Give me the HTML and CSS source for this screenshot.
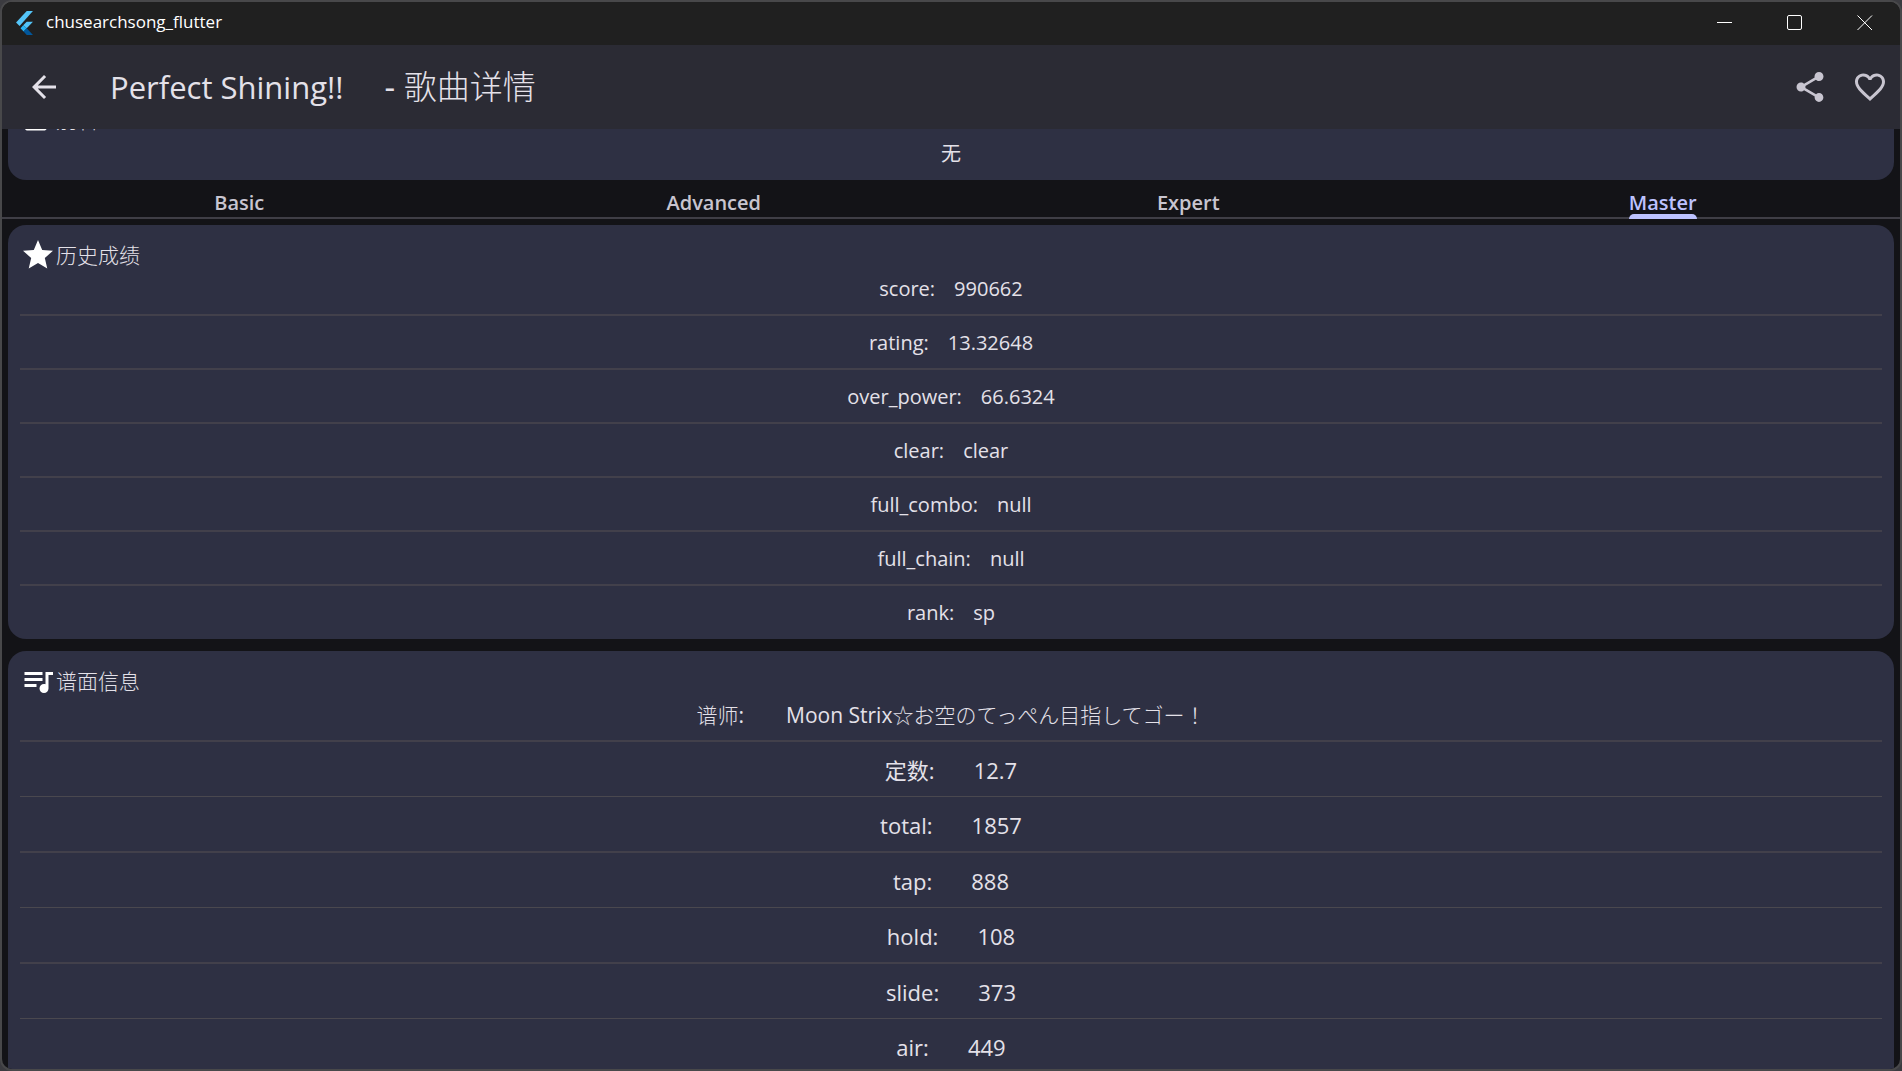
FILE: index.html
```html
<!DOCTYPE html>
<html lang="zh-CN">
<head>
<meta charset="utf-8">
<title>chusearchsong_flutter</title>
<link rel="stylesheet" href="styles.css">
</head>
<body>
<div class="window">
  <header class="titlebar">
    <svg class="logo" viewBox="0 0 19 27" aria-hidden="true">
      <path fill="#54c5f8" d="M12 0h7L4 17 0 13z"/>
      <path fill="#54c5f8" d="M12 12h7l-7 7.500-4-3.500z"/>
      <path fill="#29b6f6" d="M8 16l4 3.500L8.500 23 5 19.500z"/>
      <path fill="#01579b" d="M8.500 23l3.500-3.500 7 7.500h-7z"/>
    </svg>
    <span class="app-name">chusearchsong_flutter</span>
    <div class="controls">
      <button type="button" aria-label="Minimize"><svg viewBox="0 0 16 16"><path d="M0 7.500h15"/></svg></button>
      <button type="button" aria-label="Maximize"><svg viewBox="0 0 16 16"><rect x=".5" y=".5" width="14" height="14" rx="1.500"/></svg></button>
      <button type="button" aria-label="Close"><svg viewBox="0 0 16 16"><path d="M.5.5l14.500 14.500M15 .5L.5 15"/></svg></button>
    </div>
  </header>
  <div class="appbar">
    <button type="button" class="icon-button back" aria-label="返回"><svg class="icon" viewBox="0 0 24 24"><path d="M20 11H7.830l5.590-5.590L12 4l-8 8 8 8 1.410-1.410L7.830 13H20v-2z"/></svg></button>
    <h1 class="title"><span>Perfect Shining!!</span><span class="title-suffix">- <span class="cjk">歌曲详情</span></span></h1>
    <button type="button" class="icon-button" aria-label="分享"><svg class="icon" viewBox="0 0 24 24"><path d="M18 16.080c-.76 0-1.440.3-1.960.77L8.910 12.700c.05-.23.09-.46.09-.7s-.04-.47-.09-.7l7.050-4.110c.54.5 1.250.81 2.040.81 1.660 0 3-1.340 3-3s-1.340-3-3-3-3 1.340-3 3c0 .24.04.47.09.7L8.040 9.810C7.500 9.310 6.790 9 6 9c-1.660 0-3 1.340-3 3s1.340 3 3 3c.79 0 1.500-.31 2.040-.81l7.120 4.160c-.05.21-.08.43-.08.65 0 1.610 1.310 2.920 2.920 2.920s2.920-1.310 2.920-2.920-1.310-2.920-2.920-2.920z"/></svg></button>
    <button type="button" class="icon-button" aria-label="收藏"><svg class="icon" viewBox="0 0 24 24"><path d="M16.500 3c-1.740 0-3.410.81-4.500 2.090C10.910 3.810 9.240 3 7.500 3 4.420 3 2 5.420 2 8.500c0 3.780 3.400 6.860 8.550 11.540L12 21.350l1.450-1.320C18.600 15.360 22 12.280 22 8.500 22 5.420 19.580 3 16.500 3zm-4.400 15.550l-.1.1-.1-.1C7.140 14.240 4 11.390 4 8.500 4 6.500 5.500 5 7.500 5c1.540 0 3.040.99 3.570 2.360h1.870C13.460 5.990 14.960 5 16.500 5c2 0 3.500 1.500 3.500 3.500 0 2.890-3.140 5.740-7.900 10.050z"/></svg></button>
  </div>
  <main class="content">
    <section class="card card-alias">
      <h2 class="card-head"><svg class="icon" viewBox="0 0 24 24"><path d="M17.630 5.840C17.270 5.330 16.670 5 16 5L5 5.010C3.900 5.010 3 5.900 3 7v10c0 1.100.9 1.990 2 1.990L16 19c.67 0 1.270-.33 1.630-.84L22 12l-4.370-6.160z"/></svg>别名</h2>
      <p class="alias">无</p>
    </section>
    <nav class="tabs">
      <a href="#basic">Basic</a>
      <a href="#advanced">Advanced</a>
      <a href="#expert">Expert</a>
      <a href="#master" class="active" aria-current="true">Master</a>
    </nav>
    <section class="card">
      <h2 class="card-head"><svg class="icon" viewBox="0 0 24 24"><path d="M12 17.270L18.180 21l-1.640-7.030L22 9.240l-7.190-.61L12 2 9.190 8.630 2 9.240l5.460 4.730L5.820 21z"/></svg>历史成绩</h2>
      <dl class="rows">
        <div><dt>score:</dt><dd>990662</dd></div>
        <div><dt>rating:</dt><dd>13.32648</dd></div>
        <div><dt>over_power:</dt><dd>66.6324</dd></div>
        <div><dt>clear:</dt><dd>clear</dd></div>
        <div><dt>full_combo:</dt><dd>null</dd></div>
        <div><dt>full_chain:</dt><dd>null</dd></div>
        <div><dt>rank:</dt><dd>sp</dd></div>
      </dl>
    </section>
    <section class="card card-chart">
      <h2 class="card-head"><svg class="icon" viewBox="0 0 24 24"><path d="M15 6H3v2h12V6zm0 4H3v2h12v-2zM3 16h8v-2H3v2zM17 6v8.180c-.31-.11-.65-.18-1-.18-1.660 0-3 1.340-3 3s1.340 3 3 3 3-1.340 3-3V8h3V6h-5z"/></svg>谱面信息</h2>
      <dl class="rows rows-chart">
        <div class="charter"><dt><span class="cjk">谱师</span>:</dt><dd>Moon Strix<span class="cjk" lang="ja">☆お空のてっぺん目指してゴー！</span></dd></div>
        <div><dt>定数:</dt><dd>12.7</dd></div>
        <div><dt>total:</dt><dd>1857</dd></div>
        <div><dt>tap:</dt><dd>888</dd></div>
        <div><dt>hold:</dt><dd>108</dd></div>
        <div><dt>slide:</dt><dd>373</dd></div>
        <div><dt>air:</dt><dd>449</dd></div>
      </dl>
    </section>
  </main>
</div>
</body>
</html>
```
FILE: styles.css
```css
* { box-sizing: border-box; }

body {
  margin: 0;
  background: #3b3b40;
  color: #e4e1e9;
  font-family: "Open Sans", "Noto Sans CJK SC", sans-serif;
  font-size: 20px;
  line-height: 30px;
}

h1, h2, p, dl, dd { margin: 0; font-weight: 400; }

button {
  display: flex;
  align-items: center;
  justify-content: center;
  padding: 0;
  border: 0;
  background: none;
  color: inherit;
}

.window {
  display: flex;
  flex-direction: column;
  height: 100vh;
  overflow: hidden;
  border: 2px solid #48484a;
  border-radius: 12px;
  background: #131317;
}

.titlebar {
  display: flex;
  flex: none;
  align-items: center;
  height: 43px;
  padding: 0 0 1px 13px;
  background: #202020;
  color: #fff;
  font-size: 17px;
}

.logo { width: 19px; height: 24px; margin-right: 12px; }
.app-name { flex: 1; padding-bottom: 2px; }
.controls { display: flex; height: 100%; }
.controls button { width: 70px; }

.controls svg {
  width: 16px;
  height: 16px;
  fill: none;
  stroke: #fff;
}

.appbar {
  display: flex;
  flex: none;
  align-items: center;
  height: 84px;
  background: #2b2b34;
}

.icon { flex: none; width: 36px; height: 36px; fill: currentColor; }
.icon-button { width: 60px; height: 60px; color: #c8c5d0; }
.back { width: 84px; color: #e4e1e9; }

.title {
  display: flex;
  flex: 1;
  gap: 41px;
  margin-left: 24px;
  font-size: 31px;
  line-height: 42px;
}

.title-suffix { font-size: 33px; }

.content { flex: 1; min-height: 0; overflow: hidden; }

.card {
  margin: 6px 6px 12px;
  padding: 12px 12px 11px;
  border-radius: 18px;
  background: #2e3043;
}

.card-head {
  display: flex;
  align-items: center;
  height: 36px;
  font-size: 21px;
  font-weight: 300;
}

.card-head .icon { color: #fff; }

/* The list is scrolled, so the first card sits partly under the app bar. */
.card-alias { margin: -39px 6px 0; }
.alias { padding-top: 1px; text-align: center; }
.card-chart { padding-bottom: 36px; }

.tabs {
  display: grid;
  grid-template-columns: repeat(4, 1fr);
  justify-items: center;
  height: 39px;
  border-bottom: 2px solid #3f3e46;
}

.tabs a {
  height: 39px;
  padding-top: 8px;
  color: #c8c5d0;
  font-weight: 600;
  text-decoration: none;
}

.tabs .active { position: relative; color: #bdc2ff; }

.tabs .active::after {
  content: "";
  position: absolute;
  inset: auto 0 0;
  height: 5px;
  border-radius: 5px 5px 0 0;
  background: #bdc2ff;
}

.rows { padding-top: 1px; }

.rows > div {
  display: flex;
  justify-content: center;
  gap: 19px;
}

.rows > div + div {
  margin-top: 10px;
  padding-top: 12px;
  border-top: 2px solid #42404b;
}

.rows-chart > div {
  gap: 39px;
  font-size: 22px;
  line-height: 32px;
}

.rows-chart > .charter { gap: 42px; font-size: 21px; line-height: 30px; }
.rows-chart > div:nth-child(odd) { border-top-width: 1px; border-color: #4a484f; }
.cjk { font-weight: 300; }
```
